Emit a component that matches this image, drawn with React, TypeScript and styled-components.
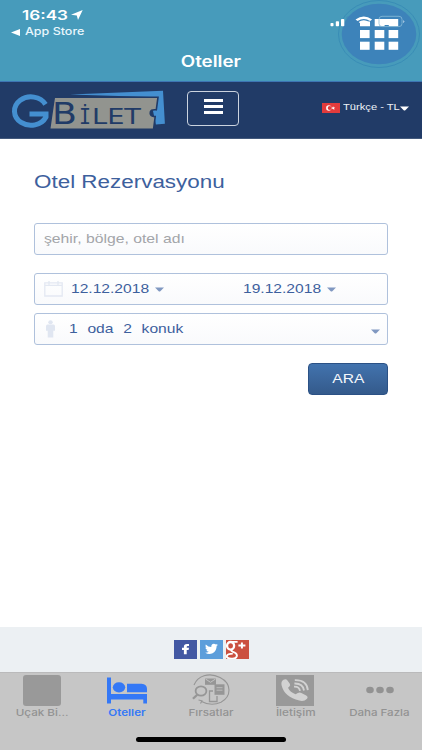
import React from "react";
import styled, { createGlobalStyle } from "styled-components";

const GlobalStyle = createGlobalStyle`
  * { box-sizing: border-box; }
  body { margin: 0; background: #fff; }
  svg { display: block; flex: none; }
`;

const Screen = styled.div`
  width: 422px;
  height: 750px;
  display: flex;
  flex-direction: column;
  overflow: hidden;
  background: #fff;
  font-family: "Liberation Sans", Arial, sans-serif;
`;

const Wide = styled.span<{ $size: number; $stretch?: number; $origin?: string }>`
  display: block;
  white-space: nowrap;
  font-size: ${(p) => p.$size}px;
  line-height: 1.2;
  transform: scaleX(${(p) => p.$stretch ?? 1.2});
  transform-origin: ${(p) => p.$origin ?? "left"} center;
`;

const TitleBar = styled.header`
  position: relative;
  flex: none;
  height: 82px;
  background: #479bbb;
  border-bottom: 1px solid #3d75b3;
  color: #fff;
  font-family: Inter, sans-serif;
`;

const Clock = styled.div`
  display: flex;
  height: 23px;
  padding: 7px 0 0 22px;
  font-weight: 600;
  svg { margin: 3px 0 0 13px; }
`;

const BackLink = styled.div`
  display: flex;
  align-items: center;
  height: 18px;
  padding: 1px 0 0 11px;
  gap: 5px;
  font-weight: 500;
  color: #e9f7fd;
`;

const PageTitle = styled.div`
  display: flex;
  justify-content: center;
  padding-top: 12px;
  font-weight: 600;
`;

const MenuBubble = styled.div`
  position: absolute;
  top: 0;
  left: 328px;
`;

const SiteBar = styled.nav`
  flex: none;
  display: flex;
  align-items: flex-start;
  height: 57px;
  background: #213b67;
  border-bottom: 1px solid #43597c;
`;

const MenuButton = styled.button`
  display: flex;
  flex-direction: column;
  align-items: center;
  gap: 3px;
  width: 52px;
  height: 35px;
  margin: 9px 0 0 20px;
  padding: 7px 0 0;
  border: 1px solid #cbd3df;
  border-radius: 4px;
  background: transparent;
`;

const MenuLine = styled.i`
  width: 19px;
  height: 3px;
  background: #fff;
`;

const Language = styled.div`
  display: flex;
  align-items: center;
  margin: 20px 0 0 83px;
  height: 12px;
  color: #edf1f7;
`;

const LanguageName = styled.div`
  width: 57px;
  margin-left: 3px;
`;

const Content = styled.main`
  flex: 1;
  padding: 0 34px;
  display: flex;
  flex-direction: column;
  color: #3d609d;
`;

const Heading = styled.h1`
  margin: 32px 0 0;
  height: 52px;
  font-weight: 400;
`;

const Field = styled.div<{ $gap?: number; $muted?: boolean }>`
  display: flex;
  align-items: center;
  flex: none;
  height: 32px;
  margin-top: ${(p) => p.$gap ?? 0}px;
  padding-left: 9px;
  border: 1px solid #afc1dc;
  border-radius: 3px;
  background: linear-gradient(#fff, #f9fafc);
  color: ${(p) => (p.$muted ? "#a3a5a9" : "#3d609d")};
`;

const DateValue = styled.div<{ $left: number }>`
  display: flex;
  align-items: center;
  margin-left: ${(p) => p.$left}px;
`;

const DateText = styled.div`
  width: 84px;
`;

const Guests = styled.div`
  flex: 1;
  margin-left: 12px;
  word-spacing: 4.5px;
`;

const GuestArrow = styled.div`
  padding: 5px 7px 0 0;
`;

const SearchButton = styled.button`
  align-self: flex-end;
  display: flex;
  align-items: center;
  justify-content: center;
  width: 80px;
  height: 32px;
  margin-top: 18px;
  padding: 0;
  border: 1px solid #2b5185;
  border-radius: 4px;
  background: linear-gradient(#4273ae, #345a8b);
  color: #f5f8fc;
  font-family: inherit;
`;

const SocialBar = styled.footer`
  flex: none;
  display: flex;
  justify-content: center;
  gap: 3px;
  height: 45px;
  padding-top: 13px;
  background: #ecf0f3;
`;

const TabBar = styled.div`
  flex: none;
  display: grid;
  grid-template-columns: repeat(5, 84.4px);
  grid-template-rows: 1fr 13px;
  height: 78px;
  background: #c6c6c6;
  border-top: 1px solid #bababb;
  font-family: Inter, sans-serif;
`;

const Tab = styled.div<{ $active?: boolean }>`
  display: flex;
  flex-direction: column;
  align-items: center;
  padding-top: 1px;
  font-weight: ${(p) => (p.$active ? 600 : 500)};
  color: ${(p) => (p.$active ? "#3478f6" : "#929292")};
`;

const TabIcon = styled.div`
  display: flex;
  align-items: center;
  height: 33px;
  padding-bottom: 1px;
`;

const HomeIndicator = styled.div`
  grid-column: 1 / -1;
  justify-self: center;
  width: 150px;
  height: 5px;
  border-radius: 3px;
  background: #000;
`;

const Caret = ({ color = "#8098c1", w = 9 }: { color?: string; w?: number }) => (
  <svg width={w} height="5" viewBox="0 0 9 5">
    <path d="M0 .4h9L5.3 4.2q-.8.6-1.6 0z" fill={color} />
  </svg>
);

const LauncherIcon = () => (
  <svg width="94" height="70" viewBox="328 0 94 70">
    <ellipse cx="379" cy="34" rx="40.5" ry="33.5" fill="#479bbb" stroke="#398db6" />
    <ellipse cx="379" cy="34" rx="37.3" ry="30.3" fill="#3d83ba" />
    <g fill="#fff">
      <rect x="330.5" y="23" width="3" height="3.3" rx=".8" />
      <rect x="335.8" y="21.3" width="3.2" height="5" rx=".8" />
      <rect x="341" y="19" width="3.3" height="7.3" rx=".8" />
      <rect x="346.5" y="16.5" width="3.2" height="9.8" rx=".8" fill="#3d83ba" opacity=".5" />
      <path d="M355.5 19.4q8.3-5.7 16.6 0l-2 1.7q-6.3-4.1-12.5 0zM358.6 22q5.2-3.5 10.4 0l-5.2 4z" />
      <path d="M360 21.5h10v4.7h-10zM374.7 19h23.5v7.2h-9.4v-1.2h-4.2v1.2h-9.9zM403.5 20.1q1.8 1.6 0 3.2z" />
      {[30, 41.7].map((y) =>
        [360, 374.7, 388.6].map((x) => <rect key={`${x}-${y}`} x={x} y={y} width="9.6" height="8.1" />),
      )}
    </g>
    <rect x="379" y="16.3" width="23" height="10.3" rx="3" fill="none" stroke="#8abdd8" strokeWidth=".8" />
  </svg>
);

const Logo = () => (
  <svg width="167" height="56" viewBox="0 82 167 56">
    <path d="M70 94.6L163 90.8l1.9 33-9 .6L150 97z" fill="#448fd0" />
    <path
      d="M54.3 97.2H158l-1.7 12.6q-6.3-.8-6.1 3.5.2 3.5 5 3.3l-1.6 12.6H49.6z"
      fill="#92948f"
      stroke="#213b67"
      strokeWidth="1.6"
    />
    <path d="M45.5 104.3A16.5 14.2 0 1 0 46 117V113.9H29.5" fill="none" stroke="#448fd0" strokeWidth="5" />
    <g fill="#213b67" fontFamily="DejaVu Sans, sans-serif">
      <text x="52" y="124.2" fontSize="30" textLength="25" lengthAdjust="spacingAndGlyphs">B</text>
      <text x="79" y="124.2" fontSize="21" textLength="12" lengthAdjust="spacingAndGlyphs" fontFamily="DejaVu Sans Mono, monospace">İ</text>
      <text x="92" y="124.2" fontSize="20.5" textLength="49" lengthAdjust="spacingAndGlyphs">LET</text>
    </g>
  </svg>
);

const Flag = () => (
  <svg width="18" height="10" viewBox="0 0 18 10">
    <rect width="18" height="10" fill="#e23b3c" />
    <circle cx="6.8" cy="5" r="2.7" fill="#fff" />
    <circle cx="7.8" cy="5" r="2.1" fill="#e23b3c" />
    <path d="M9 5l1.5-.4.6-1.4.6 1.2 1.5.2-1.1.9.3 1.4-1.3-.8z" fill="#fff" />
  </svg>
);

const CalendarIcon = () => (
  <svg width="19" height="16" viewBox="0 0 19 16" fill="none" stroke="#e3e8f2" strokeWidth="1.3">
    <path d="M.8 1.8h17.4v13.2H.8zM.8 4.4h17.4M5 0v4M14 0v4" />
  </svg>
);

const PersonIcon = () => (
  <svg width="13" height="18" viewBox="0 0 13 18" fill="#e0e6f1">
    <ellipse cx="6.5" cy="2.3" rx="2.2" ry="2" />
    <path d="M3.5 4.6h6q1.5.2 1.5 1.6v4.5H9.3V17.5H3.7v-6.8H2V6.2q0-1.4 1.5-1.6z" />
  </svg>
);

const FacebookIcon = () => (
  <svg width="23" height="19" viewBox="0 0 23 19">
    <rect width="23" height="19" fill="#4358a3" />
    <path d="M9.9 14.3V10H8V7.8h1.9V6.5q0-2.6 3-2.6H15v2h-1.3q-1 0-1 1v.9H15l-.4 2.2h-1.9v4.3z" fill="#fff" />
  </svg>
);

const TwitterIcon = () => (
  <svg width="23" height="19" viewBox="0 0 23 19">
    <rect width="23" height="19" fill="#5d9edb" />
    <path d="M5.2 12.8q2.3 0 3.6-1.1-1.9-.1-2.4-1.6h1.1Q5.4 9.3 5.4 7.4l1.1.3Q4.7 6.3 5.8 4.4q2.4 2.5 5.5 2.6-.3-3 2.6-3.2 1.2 0 2 .8l1.7-.6q-.3.9-1.1 1.4l1.5-.4-1.4 1.3q.1 4.5-4 7-3.7 1.7-7.4-.5z" fill="#fff" />
  </svg>
);

const GooglePlusIcon = () => (
  <svg width="23" height="19" viewBox="0 0 23 19">
    <rect width="23" height="19" fill="#cb5140" />
    <g fill="none" stroke="#fff">
      <ellipse cx="4.6" cy="5.8" rx="3.5" ry="3.8" strokeWidth="2.3" />
      <path d="M5 1.9H11.6M6.5 9.4q-2.5 1.2 0 2.2 5 1.6 4.3 4.6Q10 19 5.5 18.6q-5-.2-4.7-2.4.5-2.6 6-2.6" strokeWidth="1.9" />
      <path d="M12.4 5.6h7M15.9 2.6v6" strokeWidth="2" />
    </g>
  </svg>
);

const BlankIcon = () => (
  <svg width="38" height="31"><rect width="38" height="31" rx="3" fill="#999" /></svg>
);

const BedIcon = () => (
  <svg width="40" height="27" viewBox="0 0 40 27" fill="#3478f6">
    <path d="M0 .5h4V17h36v9.5h-3.7V22.5H4v4H0z" />
    <ellipse cx="12" cy="10.3" rx="6.2" ry="5.1" />
    <path d="M20 6.8h14.5Q40 7.3 40 12v3.2H20z" />
  </svg>
);

const OffersIcon = () => (
  <svg width="38" height="32" viewBox="0 0 38 32" fill="none" stroke="#969696" strokeWidth="1.1">
    <path d="M2 11Q5 4 12 1.8 20-.7 28 3.5 37 8 37 16q0 8-8 12.2-10 4.5-20-1" />
    <path d="M6.5 26l3.5.8-1.5 2.7" />
    <ellipse cx="9" cy="17" rx="5.4" ry="4.7" strokeWidth="1.8" />
    <path d="M5.2 20.7L1 24.8" strokeWidth="2.3" />
    <rect x="13" y="4.5" width="11" height="6.3" fill="#969696" stroke="none" />
    <path d="M13.5 5l5 3.3L23.5 5" stroke="#c6c6c6" strokeWidth=".9" />
    <path d="M21 17h-3.500v10.500h7.500v-5.500" strokeWidth="1.3" />
    <path d="M22.500 10.300h10v10.500h-10z" fill="#969696" stroke="none" />
    <path d="M24.500 13.700h6M24.500 16.200h6" stroke="#c6c6c6" strokeWidth=".8" />
  </svg>
);

const PhoneIcon = () => (
  <svg width="38" height="31" viewBox="0 0 38 31">
    <rect width="38" height="31" fill="#999" />
    <path d="M7.500 4.800q2.500-1.200 4 .7l2.300 3.200q1 1.700-.6 3l-1.200 1q2.100 4.500 7.600 6.500l2.200-1.200q1.900-1 3.600 0l4.800 2.500q2.300 1.400.8 3.200-3 3.100-7.700 1.800Q8.500 22 5.700 10.700 4.600 6.400 7.500 4.800z" fill="#d2d2d2" />
    <path d="M18 11.700q5.200-.3 6 4.200M18.400 8.500q8.500-.3 9.600 7M18.800 5.200q12.100-.3 13 10" fill="none" stroke="#d2d2d2" strokeWidth="1.800" />
  </svg>
);

const MoreIcon = () => (
  <svg width="28" height="8" viewBox="0 0 28 8" fill="#929292">
    {[4, 14, 24].map((x) => <ellipse key={x} cx={x} cy="4" rx="3.8" ry="3.2" />)}
  </svg>
);

const tabs = [
  { name: "Uçak Bi...", icon: <BlankIcon />, stretch: 1.25 },
  { name: "Oteller", icon: <BedIcon />, active: true, stretch: 1.25 },
  { name: "Fırsatlar", icon: <OffersIcon />, stretch: 1.25 },
  { name: "İletişim", icon: <PhoneIcon />, stretch: 1.26 },
  { name: "Daha Fazla", icon: <MoreIcon />, stretch: 1.24 },
];

export default function App() {
  return (
    <Screen>
      <GlobalStyle />
      <TitleBar>
        <Clock>
          <Wide $size={13.4} $stretch={1.28}>16:43</Wide>
          <svg width="12" height="10" viewBox="0 0 12 10"><path d="M11.7 0L7 10 5.8 5.4 0 4.8z" fill="#fff" /></svg>
        </Clock>
        <BackLink>
          <svg width="9" height="7" viewBox="0 0 9 7"><path d="M0 3.5L9 0v7z" fill="#fff" /></svg>
          <Wide $size={10.5} $stretch={1.19}>App Store</Wide>
        </BackLink>
        <PageTitle><Wide $size={15.5} $stretch={1.21} $origin="center">Oteller</Wide></PageTitle>
        <MenuBubble><LauncherIcon /></MenuBubble>
      </TitleBar>
      <SiteBar>
        <Logo />
        <MenuButton aria-label="Menü"><MenuLine /><MenuLine /><MenuLine /></MenuButton>
        <Language>
          <Flag />
          <LanguageName><Wide $size={9.3}>Türkçe - TL</Wide></LanguageName>
          <Caret color="#fff" />
        </Language>
      </SiteBar>
      <Content>
        <Heading><Wide $size={18.7} $stretch={1.2}>Otel Rezervasyonu</Wide></Heading>
        <Field $muted><Wide $size={12.9} $stretch={1.22}>şehir, bölge, otel adı</Wide></Field>
        <Field $gap={18}>
          <CalendarIcon />
          <DateValue $left={8}><DateText><Wide $size={13}>12.12.2018</Wide></DateText><Caret /></DateValue>
          <DateValue $left={79}><DateText><Wide $size={13}>19.12.2018</Wide></DateText><Caret /></DateValue>
        </Field>
        <Field $gap={8}>
          <PersonIcon />
          <Guests><Wide $size={13}>1 oda 2 konuk</Wide></Guests>
          <GuestArrow><Caret /></GuestArrow>
        </Field>
        <SearchButton><Wide $size={13} $origin="center">ARA</Wide></SearchButton>
      </Content>
      <SocialBar><FacebookIcon /><TwitterIcon /><GooglePlusIcon /></SocialBar>
      <TabBar>
        {tabs.map((t) => (
          <Tab key={t.name} $active={t.active}>
            <TabIcon>{t.icon}</TabIcon>
            <Wide $size={9.3} $stretch={t.stretch} $origin="center">{t.name}</Wide>
          </Tab>
        ))}
        <HomeIndicator />
      </TabBar>
    </Screen>
  );
}
